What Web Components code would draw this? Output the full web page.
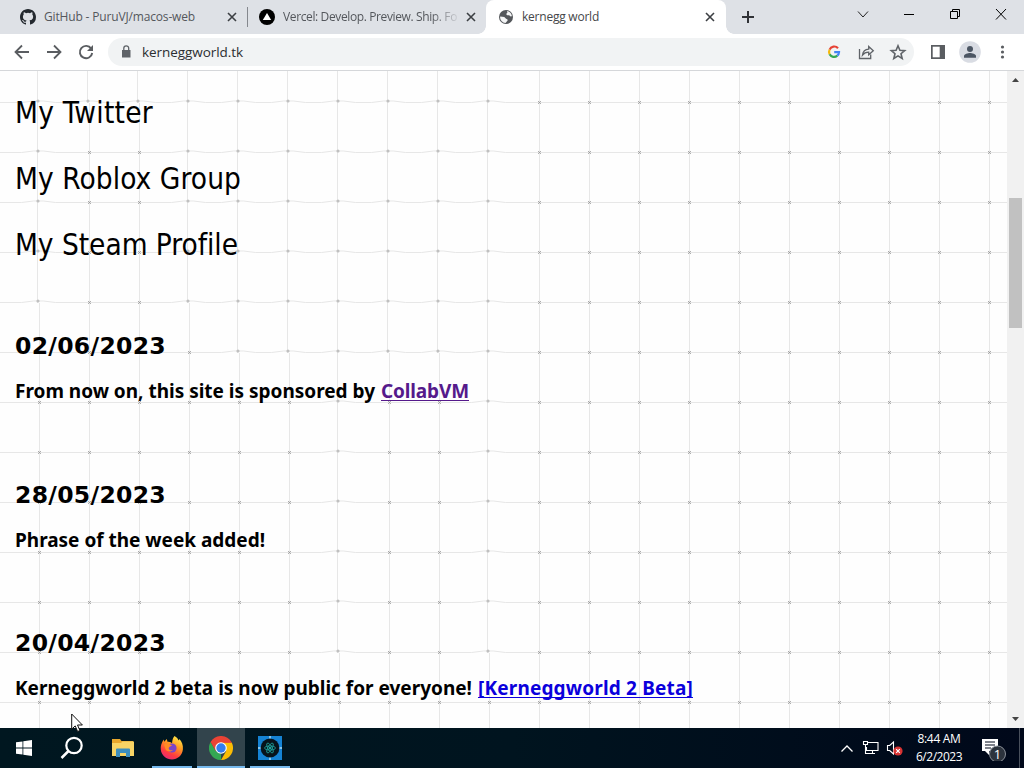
<!DOCTYPE html>
<html lang="en">
<head>
<meta charset="utf-8">
<title>kernegg world</title>
<style>
  html, body { margin: 0; height: 100%; overflow: hidden; background: #fefefe; }
</style>
</head>
<body>
<desk-top>
  <browser-window slot="window">
    <browser-tab slot="tabs" kind="github" size="248" fit="151">GitHub - PuruVJ/macos-web</browser-tab>
    <browser-tab slot="tabs" kind="vercel" size="238" fit="174">Vercel: Develop. Preview. Ship. Fo</browser-tab>
    <browser-tab slot="tabs" kind="globe" size="240" fit="77" active>kernegg world</browser-tab>
    <fit-text slot="address" width="101">kerneggworld.tk</fit-text>
    <web-page slot="page">
      <fit-text slot="links" width="138">My Twitter</fit-text>
      <fit-text slot="links" width="226">My Roblox Group</fit-text>
      <fit-text slot="links" width="223">My Steam Profile</fit-text>
      <news-item>
        <fit-text slot="date" width="151">02/06/2023</fit-text>
        <fit-text width="360">From now on, this site is sponsored by</fit-text>
        <fit-text class="link" width="88" style="color:#551a8b">CollabVM</fit-text>
      </news-item>
      <news-item>
        <fit-text slot="date" width="151">28/05/2023</fit-text>
        <fit-text width="250">Phrase of the week added!</fit-text>
      </news-item>
      <news-item>
        <fit-text slot="date" width="151">20/04/2023</fit-text>
        <fit-text width="457">Kerneggworld 2 beta is now public for everyone!</fit-text>
        <fit-text class="link" width="215" style="color:#0b00dc">[Kerneggworld 2 Beta]</fit-text>
      </news-item>
    </web-page>
  </browser-window>
  <task-bar slot="taskbar"></task-bar>
</desk-top>

<script>
// small helper so every element gets an open root from a template
function render(el, html) {
  const t = document.createElement("template");
  t.innerHTML = html;
  el.attachShadow({ mode: "open" }).appendChild(t.content.cloneNode(true));
}

const icons = {
  github: `<svg width="16" height="16" viewBox="0 0 16 16"><path fill="#24292f" d="M8 0C3.58 0 0 3.58 0 8c0 3.54 2.29 6.53 5.47 7.59.4.07.55-.17.55-.38 0-.19-.01-.82-.01-1.49-2.01.37-2.53-.49-2.69-.94-.09-.23-.48-.94-.82-1.13-.28-.15-.68-.52-.01-.53.63-.01 1.08.58 1.23.82.72 1.21 1.87.87 2.33.66.07-.52.28-.87.51-1.07-1.78-.2-3.64-.89-3.64-3.95 0-.87.31-1.59.82-2.15-.08-.2-.36-1.02.08-2.12 0 0 .67-.21 2.2.82a7.6 7.6 0 0 1 4 0c1.53-1.04 2.2-.82 2.2-.82.44 1.1.16 1.92.08 2.12.51.56.82 1.27.82 2.15 0 3.07-1.87 3.75-3.65 3.95.29.25.54.73.54 1.48 0 1.07-.01 1.93-.01 2.2 0 .21.15.46.55.38A8 8 0 0 0 16 8c0-4.42-3.58-8-8-8z"/></svg>`,
  vercel: `<svg width="16" height="16" viewBox="0 0 16 16"><circle cx="8" cy="8" r="8"/><path fill="#fff" d="M8 4l4.2 7H3.8z"/></svg>`,
  globe: `<svg width="16" height="16" viewBox="0 0 16 16"><circle cx="8" cy="8" r="7" fill="#54575b"/><path fill="#f4f5f6" d="M9 2.1c2.6.4 4.6 2.5 4.9 5-.8.6-1.8.2-2.4-.7-.8-.2-2 .2-2.7-.5-.9-.8-.2-1.7.6-2.1zM2.2 7.4c1.5.2 2.6.3 4 .7 1.1.4 1.1 1.6 2.4 1.8 1.2.3 1.5 1.1.6 2-.6.6-1 1.2-1.7 2-3-.2-5.3-2.7-5.4-5.7z"/></svg>`
};

// Keeps a run of text at a given width by spreading its letters
class FitText extends HTMLElement {
  constructor() {
    super();
    render(this, `
<style>
  :host { display: inline-block; white-space: nowrap; }
  :host(.link) { text-decoration: underline; text-decoration-thickness: 1px; text-underline-offset: 2px; text-decoration-skip-ink: none; }
</style><span><slot></slot></span>`);
  }
  connectedCallback() {
    const span = this.shadowRoot.querySelector("span");
    const nodes = this.shadowRoot.querySelector("slot").assignedNodes({ flatten: true });
    const count = nodes.map(n => n.textContent).join("").trim().length;
    const diff = this.getAttribute("width") - span.getBoundingClientRect().width;
    span.style.letterSpacing = (diff / count) + "px";
  }
}

class DeskTop extends HTMLElement {
  constructor() {
    super();
    render(this, `
<style>
  :host { display: flex; flex-direction: column; width: 1024px; height: 768px; position: relative; overflow: hidden; }
  .pointer { position: absolute; left: 71px; top: 713px; }
</style>
<slot name="window"></slot>
<slot name="taskbar"></slot>
<svg class="pointer" width="14" height="20" viewBox="0 0 14 20"><path d="M.7 1v15.2l3.5-3.3 2.4 5.6 2.3-1-2.4-5.5h4.900z" fill="#fff" stroke="#111" stroke-width="1"/></svg>`);
  }
}

class BrowserWindow extends HTMLElement {
  constructor() {
    super();
    render(this, `
<style>
  :host { display: flex; flex-direction: column; height: 728px; font-family: "Open Sans", "Noto Sans", sans-serif; }
  .strip { display: flex; height: 34px; background: #dee1e6; }
  .plus { display: block; margin: 10px 0 0 15px; }
  .controls { display: flex; margin-left: auto; }
  .controls svg { display: block; width: 46px; height: 30px; }
  .bar { display: flex; align-items: center; box-sizing: border-box; height: 37px; border-bottom: 1px solid #d5d7da; background: #fff; }
  .nav { display: flex; gap: 12px; padding-left: 12px; width: 96px; }
  .omni { display: flex; align-items: center; box-sizing: border-box; width: 806px; height: 28px; padding: 0 6px 0 8px; border-radius: 14px; background: #f1f3f4; font-size: 13.5px; line-height: 20px; color: #2b2d30; }
  .lock { margin-right: 6px; }
  .tools { display: flex; gap: 12px; margin-left: auto; }
  .tools svg { display: block; width: 20px; height: 20px; }
  .right { display: flex; align-items: center; padding-left: 14px; }
</style>
<div class="strip">
  <slot name="tabs"></slot>
  <svg class="plus" width="14" height="14"><path d="M7 1v12M1 7h12" stroke="#303236" stroke-width="2"/></svg>
  <div class="controls">
    <svg viewBox="0 0 46 30"><path d="M18 11.5l5 5.500 5-5.500" fill="none" stroke="#222"/></svg>
    <svg viewBox="0 0 46 30"><path d="M18 14.5h10" stroke="#000"/></svg>
    <svg viewBox="0 0 46 30"><path d="M18.500 11.500h7v7h-7zM20.500 11.500v-2h7v7h-2" fill="none" stroke="#000"/></svg>
    <svg viewBox="0 0 46 30"><path d="M18 9l10 10.500M28 9L18 19.500" stroke="#000"/></svg>
  </div>
</div>
<div class="bar">
  <div class="nav">
    <svg width="20" height="20" viewBox="0 0 20 20"><path d="M17 10H4M10 3.500L3.500 10l6.500 6.500" fill="none" stroke="#5a5d61" stroke-width="1.800"/></svg>
    <svg width="20" height="20" viewBox="0 0 20 20"><path d="M3 10h13M10 3.500l6.500 6.500-6.500 6.500" fill="none" stroke="#5a5d61" stroke-width="1.800"/></svg>
    <svg width="20" height="20" viewBox="0 0 20 20"><path d="M15.200 6.600A6.200 6.200 0 1 0 16.200 11" fill="none" stroke="#5a5d61" stroke-width="1.900"/><path d="M17 3v6h-6z" fill="#5a5d61"/></svg>
  </div>
  <div class="omni">
    <svg class="lock" width="20" height="20" viewBox="0 0 20 20"><path fill="#5f6368" d="M6 8h8.500v7.500H6z"/><path d="M7.800 8.500V6.300a2.450 2.450 0 0 1 4.900 0v2.200" fill="none" stroke="#5f6368" stroke-width="1.300"/></svg>
    <slot name="address"></slot>
    <div class="tools">
      <svg viewBox="0 0 20 20"><g fill="none" stroke-width="2.200"><path d="M14 6.200A5 5 0 0 0 5.600 7.700" stroke="#e64235"/><path d="M5.600 7.700a5 5 0 0 0 0 4.600" stroke="#f5b80b"/><path d="M5.600 12.300a5 5 0 0 0 7.700 1.400" stroke="#34a853"/><path d="M13.300 13.700A5 5 0 0 0 15 10.200h-4.800" stroke="#4285f4"/></g></svg>
      <svg viewBox="0 0 20 20"><path d="M3.500 7v9.500h11.200v-4M6.500 13c.5-4 3-5.800 6.200-5.900V4.500l4.600 4.300-4.600 4v-2.600c-2.700 0-4.700.8-6.200 2.800z" fill="none" stroke="#5f6368" stroke-width="1.300"/></svg>
      <svg viewBox="0 0 20 20"><path d="M10 3.700l1.900 4.500 4.800.4-3.700 3.100 1.200 4.800-4.200-2.600-4.200 2.600 1.200-4.800-3.700-3.100 4.800-.4z" fill="none" stroke="#5f6368" stroke-width="1.600"/></svg>
    </div>
  </div>
  <div class="right">
    <svg width="20" height="20" viewBox="0 0 20 20"><path d="M3 3h14v14H3z" fill="#5a5d61"/><path fill="#fff" d="M4.700 4.700h7v10.600h-7z"/></svg>
    <svg width="22" height="22" viewBox="0 0 22 22" style="margin-left:11px"><circle cx="11" cy="11" r="10.800" fill="#d9dce3"/><circle cx="11" cy="8" r="3" fill="#4c5663"/><path fill="#4c5663" d="M5 16.800v-1.700c0-2 4-3 6-3s6 1 6 3v1.700z"/></svg>
    <svg width="20" height="20" viewBox="0 0 20 20" style="margin-left:12px"><g fill="#5a5d61"><circle cx="9.500" cy="5" r="1.600"/><circle cx="9.500" cy="10" r="1.600"/><circle cx="9.500" cy="15" r="1.600"/></g></svg>
  </div>
</div>
<slot name="page"></slot>`);
  }
}

class BrowserTab extends HTMLElement {
  constructor() {
    super();
    const active = this.hasAttribute("active");
    const kind = this.getAttribute("kind");
    render(this, `
<style>
  :host { display: flex; align-items: center; box-sizing: border-box; flex: none; width: ${this.getAttribute("size")}px; height: 34px; position: relative; color: #54575c; font-size: 12px; line-height: 18px; }
  :host([active]) { background: #fff; border-radius: 8px 8px 0 0; color: #45474a; }
  :host([active])::before, :host([active])::after { content: ""; position: absolute; bottom: 0; width: 8px; height: 8px; }
  :host([active])::before { left: -8px; background: radial-gradient(circle at 0 0, transparent 7.500px, #fff 8px); }
  :host([active])::after { right: -8px; background: radial-gradient(circle at 100% 0, transparent 7.500px, #fff 8px); }
  .icon { display: flex; margin: 0 8px 0 ${kind == "github" ? 20 : kind == "vercel" ? 11 : 12}px; }
  .label { flex: 1; overflow: hidden; }
  .fade { -webkit-mask-image: linear-gradient(90deg, #000 148px, transparent 178px); }
  .close { display: block; margin-right: ${kind == "globe" ? 11 : 10}px; }
  .line { width: 1px; height: 20px; background: #85888e; }
</style>
<span class="icon">${icons[kind]}</span>
<span class="label ${kind == "vercel" ? "fade" : ""}"><fit-text width="${this.getAttribute("fit")}"><slot></slot></fit-text></span>
<svg class="close" width="10" height="10"><path d="M1 1l8 8M9 1L1 9" stroke="#3c3f43" stroke-width="1.600"/></svg>
${kind == "github" ? '<span class="line"></span>' : ""}`);
    if (active) this.style.zIndex = 1;
  }
}

class WebPage extends HTMLElement {
  constructor() {
    super();
    render(this, `
<style>
  :host { display: flex; height: 657px; overflow: hidden; background: #fefefe; color: #000; font-family: "Noto Sans", sans-serif; }
  .view { flex: 1; position: relative; overflow: hidden; }
  page-grid { position: absolute; left: 0; top: 0; }
  .content { position: relative; padding: 24px 0 0 15px; }
  .links { display: flex; flex-direction: column; align-items: flex-start; gap: 30px; height: 236px; font-family: "DejaVu Sans Condensed", "DejaVu Sans", sans-serif; font-size: 29.500px; line-height: 36px; }
</style>
<div class="view">
  <page-grid></page-grid>
  <div class="content">
    <div class="links"><slot name="links"></slot></div>
    <slot></slot>
  </div>
</div>
<scroll-bar></scroll-bar>`);
  }
}

class NewsItem extends HTMLElement {
  constructor() {
    super();
    render(this, `
<style>
  :host { display: block; height: 148.500px; font-weight: bold; }
  .date { height: 29px; margin-bottom: 20px; font-family: "DejaVu Sans", sans-serif; font-size: 23.500px; line-height: 31px; }
  .body { display: flex; gap: 6px; font-size: 19px; line-height: 23px; }
</style>
<div class="date"><slot name="date"></slot></div>
<div class="body"><slot></slot></div>`);
  }
}

// Tiled squares with a little cross where the lines meet
class PageGrid extends HTMLElement {
  constructor() {
    super();
    // some crossings sit a bit up and to the left of the tile corner
    const nudged = (c, r) => {
      if (c > 9 || r > 11) return false;
      if (r == 0 || c == 6 || c == 9) return true;
      if (r <= 4) return c == 0 || c >= 3;
      return r == 5 && c >= 4;
    };
    let lines = "", soft = "", marks = "";
    for (let r = 0; r < 13; r++) {
      const y = 31.5 + r * 50;
      let d = `M0 ${y}`;
      for (let c = 0; c < 20; c++) {
        const x = 39.5 + c * 50;
        if (nudged(c, r)) {
          d += `H${x - 18}L${x - 6} ${y - 1.5}H${x + 4}L${x + 16} ${y}`;
          soft += `<circle cx="${x - 1.5}" cy="${y - 1.5}" r="1.600"/>`;
        } else {
          marks += `M${x - 1.5} ${y - 1.5}l3 3m0-3l-3 3`;
        }
      }
      lines += d + "H1008";
    }
    for (let c = 0; c < 20; c++) {
      for (let r = 0; r < 14; r++) {
        const x = 39.5 + c * 50 - (nudged(c, r) ? 2 : 0);
        lines += `M${x} ${Math.max(0, r * 50 - 18)}V${r * 50 + 32}`;
      }
    }
    render(this, `
<style>:host, svg { display: block; }</style>
<svg width="1008" height="657" fill="none">
  <path d="${lines}" stroke="#e7e7e7"/>
  <path d="${marks}" stroke="#999" stroke-width=".8"/>
  <g fill="#c0c0c0">${soft}</g>
</svg>`);
  }
}

class ScrollBar extends HTMLElement {
  constructor() {
    super();
    render(this, `
<style>
  :host { display: flex; flex-direction: column; align-items: center; width: 17px; background: #f1f1f1; }
  svg { display: block; flex: none; }
  .thumb { width: 13px; height: 130px; margin-top: 110px; margin-bottom: auto; background: #c1c1c1; }
</style>
<svg width="17" height="17"><path d="M5 11l3.500-4 3.500 4z" fill="#444"/></svg>
<div class="thumb"></div>
<svg width="17" height="17"><path d="M5 6l3.500 4L12 6z" fill="#444"/></svg>`);
  }
}

class TaskBar extends HTMLElement {
  constructor() {
    super();
    render(this, `
<style>
  :host { display: flex; height: 40px; background: linear-gradient(90deg, #001720, #00141f 50%, #000b1b 85%, #00081a); color: #fff; font-family: "Open Sans", "Noto Sans", sans-serif; }
  .app { display: flex; align-items: center; justify-content: center; position: relative; width: 48px; }
  .open::after { content: ""; position: absolute; left: 4px; right: 4px; bottom: 0; height: 2px; background: #76b9ed; }
  .here { background: #32444c; }
  .here::after { left: 0; right: 0; }
  .tray { display: flex; align-items: center; margin-left: auto; }
  .clock { display: flex; flex-direction: column; align-items: center; width: 48px; margin: 0 18px 0 11px; font-size: 12px; line-height: 18px; }
  svg { display: block; }
  .edge { width: 1px; height: 40px; margin: 0 4px 0 12px; background: #49505c; }
</style>
<div class="app"><svg width="16" height="16"><path fill="#fff" d="M0 2.300L6.500 1.400v6.200H0zM7.300 1.300L16 0v7.600H7.300zM0 8.400h6.500v6.200L0 13.700zM7.300 8.400H16V16l-8.700-1.300z"/></svg></div>
<div class="app"><svg width="24" height="24"><circle cx="14" cy="9.500" r="7.700" fill="none" stroke="#fff" stroke-width="2.200"/><path d="M8.500 15l-7 7" stroke="#fff" stroke-width="2.500"/></svg></div>
<div class="app" style="width:52px"><svg width="22" height="20" viewBox="0 0 22 20" style="margin-left:2px"><path fill="#e8a72d" d="M0 1h8l1.500 2H21v5H0z"/><path fill="#f8d465" d="M0 5h9l1.500-1.500H22V18H0z"/><path fill="#3d8ebd" d="M4 11.500a1 1 0 0 1 1-1h12a1 1 0 0 1 1 1V19h-4v-4H8v4H4z"/></svg></div>
<div class="app open"><svg width="24" height="24" viewBox="0 0 24 24">
  <defs><linearGradient id="f" x1=".8" y1="0" x2=".3" y2="1"><stop offset="0" stop-color="#fff04a"/><stop offset=".4" stop-color="#ff9a22"/><stop offset=".75" stop-color="#ff3b40"/><stop offset="1" stop-color="#e52a75"/></linearGradient></defs>
  <path fill="url(#f)" d="M14.500 0c3 1.600 3.300 3.200 4.300 4.600l.5-1.500c2.500 2.500 4 6 3.600 10.200C22.300 19.500 17.500 23.500 12 23.500S1.300 19.500.8 13.500C.4 10 1.500 7 3.700 3.500l.5 2.300 2.600-2.700.7 2.600c2.300-.3 3.800.4 4.500 1.800.5-3.200.4-5.100 2.500-7.500z"/>
  <circle cx="12" cy="12" r="4.600" fill="#7a45c8"/><path fill="#ff8b24" d="M4 8.500c3-1.500 5.500-.5 8 .7-1 1.500-3 1.200-3.300 2.800-.2 1.900 2 2.800 4.300 2-2 2.200-6 2-7.500-.7z"/>
</svg></div>
<div class="app open here" style="margin-left:1px"><svg width="24" height="24" viewBox="0 0 24 24">
  <path fill="#ea4335" d="M12 12L1.600 6a12 12 0 0 1 20.800 0z"/><path fill="#34a853" d="M1.600 6l5.200 9L12 18v6A12 12 0 0 1 1.600 6z"/><path fill="#fbbc05" d="M12 6.500h10.700A12 12 0 0 1 12 24l5.200-9z"/><path fill="#ea4335" d="M1.600 6h20.800l.3.700H12L6.800 15z"/><circle cx="12" cy="12" r="5.800" fill="#fff"/><circle cx="12" cy="12" r="4.700" fill="#347df0"/>
</svg></div>
<div class="app open" style="margin-left:1px"><svg width="24" height="24" viewBox="0 0 24 24">
  <path fill="#1583d4" d="M0 0h24v24H0z"/><path d="M12 0v24M0 12h24" stroke="#a8dcf6" stroke-width="1.500"/><circle cx="12" cy="12" r="9.400" fill="#07131b"/><g fill="none" stroke="#20a6a0" stroke-width=".8"><ellipse cx="12" cy="12" rx="5.500" ry="2.100"/><ellipse cx="12" cy="12" rx="5.500" ry="2.100" transform="rotate(60 12 12)"/><ellipse cx="12" cy="12" rx="5.500" ry="2.100" transform="rotate(120 12 12)"/></g><circle cx="12" cy="12" r="1.200" fill="#20a6a0"/>
</svg></div>
<div class="tray">
  <svg width="14" height="10"><path d="M1.500 8.500L7 3l5.500 5.500" fill="none" stroke="#fff" stroke-width="1.300"/></svg>
  <svg width="17" height="16" style="margin-left:8px"><path d="M5 2.500h11v8H4.500V7M1.500 1.500h4v3h-4zM3.500 4.500v9H13M10.500 10.500v3" fill="none" stroke="#fff" stroke-width="1.100"/></svg>
  <svg width="18" height="18" style="margin-left:7px"><path d="M1.500 6.500h2.200L7.500 3v12l-3.800-3.500H1.500z" fill="none" stroke="#fff" stroke-width="1.100"/><circle cx="12" cy="12" r="4.600" fill="#d83333"/><path d="M10.200 10.200l3.600 3.600m0-3.600l-3.600 3.600" stroke="#fff" stroke-width="1.200"/></svg>
  <div class="clock"><fit-text width="43">8:44 AM</fit-text><fit-text width="46">6/2/2023</fit-text></div>
  <svg width="26" height="26" viewBox="0 0 26 26"><path fill="#fff" d="M1 4h16v12h-9v4l-4-4H1z"/><path d="M4 7h10M4 10h10M4 13h6" stroke="#00081a" stroke-width="1.200"/><circle cx="16.500" cy="19" r="8" fill="#2c333d" stroke="#8a9099"/><text x="16.500" y="23.500" text-anchor="middle" font-size="13" fill="#fff">1</text></svg>
  <div class="edge"></div>
</div>`);
  }
}

customElements.define("desk-top", DeskTop);
customElements.define("browser-window", BrowserWindow);
customElements.define("browser-tab", BrowserTab);
customElements.define("web-page", WebPage);
customElements.define("news-item", NewsItem);
customElements.define("page-grid", PageGrid);
customElements.define("scroll-bar", ScrollBar);
customElements.define("task-bar", TaskBar);
// last, since it measures text that takes its font from the others
customElements.define("fit-text", FitText);
</script>
</body>
</html>
